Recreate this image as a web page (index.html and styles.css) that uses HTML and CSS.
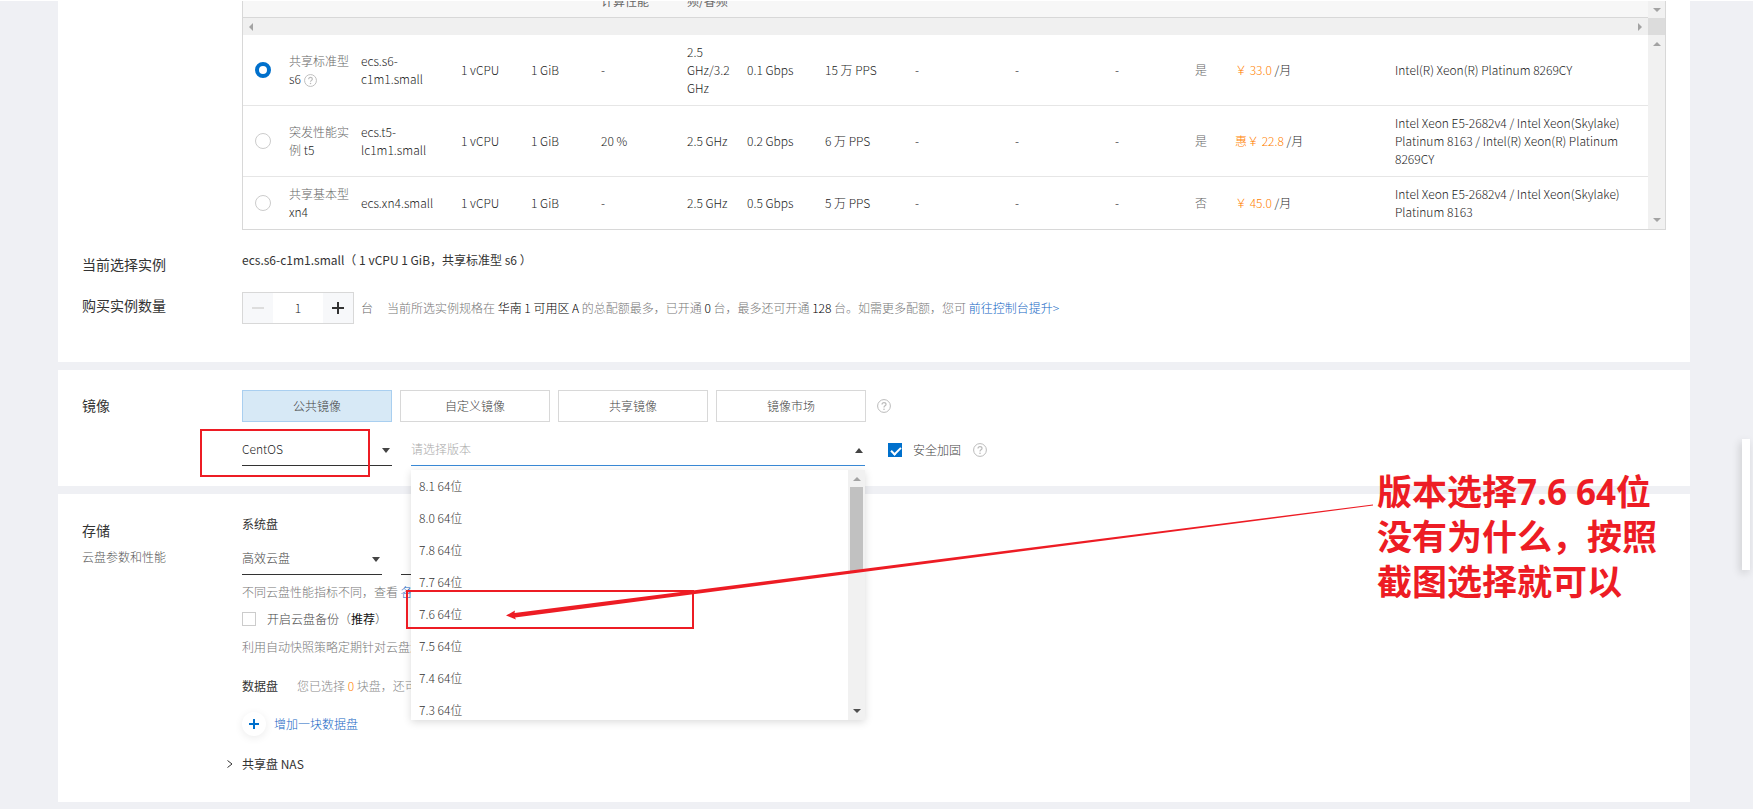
FILE: index.html
```html
<!DOCTYPE html>
<html lang="zh-CN">
<head>
  <meta charset="UTF-8" />
  <meta name="viewport" content="width=device-width, initial-scale=1.0" />
  <title>云服务器 ECS</title>
  <link rel="stylesheet" href="styles.css">
</head>
<body>
  <svg class="defs" width="0" height="0" aria-hidden="true">
    <symbol id="help" viewBox="0 0 14 14">
      <circle cx="7" cy="7" r="6.4" fill="none" stroke="currentColor" />
      <path d="M5 5.6C5 4.3 5.8 3.6 7 3.6s2 .7 2 1.8c0 1.4-2 1.5-2 3" fill="none" stroke="currentColor" stroke-width="1.2" />
      <circle cx="7" cy="10.3" r=".8" fill="currentColor" />
    </symbol>
  </svg>

  <main class="page">
    <!-- Instance type -->
    <section class="panel">
      <div class="form-row spec-row">
        <div class="spec">
          <div class="spec-head">
            <table class="spec-table">
              <colgroup>
                <col class="c-radio"><col class="c-name"><col class="c-id"><col class="c-short"><col class="c-short"><col class="c-perf"><col class="c-freq"><col class="c-band"><col class="c-pps"><col class="c-dash"><col class="c-dash"><col class="c-flag"><col class="c-ipv6"><col class="c-price"><col>
              </colgroup>
              <tr>
                <th></th><th></th><th></th><th></th><th></th>
                <th>计算性能</th><th>频/睿频</th>
                <th></th><th></th><th></th><th></th><th></th><th></th><th></th><th></th>
              </tr>
            </table>
            <div class="bar-v"><i class="tri down"></i></div>
          </div>
          <div class="bar-h">
            <i class="tri left"></i>
            <i class="tri right"></i>
            <span class="corner"></span>
          </div>
          <div class="spec-body">
            <table class="spec-table">
              <colgroup>
                <col class="c-radio"><col class="c-name"><col class="c-id"><col class="c-short"><col class="c-short"><col class="c-perf"><col class="c-freq"><col class="c-band"><col class="c-pps"><col class="c-dash"><col class="c-dash"><col class="c-flag"><col class="c-ipv6"><col class="c-price"><col>
              </colgroup>
              <tr>
                <td><input type="radio" name="spec" aria-label="ecs.s6-c1m1.small" checked></td>
                <td class="family">共享标准型<br><b>s6</b> <svg class="help small"><use href="#help" /></svg></td>
                <td>ecs.s6-<br>c1m1.small</td>
                <td>1 vCPU</td><td>1 GiB</td><td>-</td>
                <td>2.5<br>GHz/3.2<br>GHz</td>
                <td>0.1 Gbps</td><td>15 万 PPS</td><td>-</td><td>-</td><td>-</td>
                <td class="muted">是</td>
                <td><span class="price">￥ 33.0</span> /月</td>
                <td>Intel(R) Xeon(R) Platinum 8269CY</td>
              </tr>
              <tr>
                <td><input type="radio" name="spec" aria-label="ecs.t5-lc1m1.small"></td>
                <td class="family">突发性能实<br>例 <b>t5</b></td>
                <td>ecs.t5-<br>lc1m1.small</td>
                <td>1 vCPU</td><td>1 GiB</td><td>20 %</td>
                <td>2.5 GHz</td>
                <td>0.2 Gbps</td><td>6 万 PPS</td><td>-</td><td>-</td><td>-</td>
                <td class="muted">是</td>
                <td><span class="price">惠￥ 22.8</span> /月</td>
                <td>Intel Xeon E5-2682v4 / Intel Xeon(Skylake)<br>Platinum 8163 / Intel(R) Xeon(R) Platinum<br>8269CY</td>
              </tr>
              <tr>
                <td><input type="radio" name="spec" aria-label="ecs.xn4.small"></td>
                <td class="family">共享基本型<br><b>xn4</b></td>
                <td>ecs.xn4.small</td>
                <td>1 vCPU</td><td>1 GiB</td><td>-</td>
                <td>2.5 GHz</td>
                <td>0.5 Gbps</td><td>5 万 PPS</td><td>-</td><td>-</td><td>-</td>
                <td class="muted">否</td>
                <td><span class="price">￥ 45.0</span> /月</td>
                <td>Intel Xeon E5-2682v4 / Intel Xeon(Skylake)<br>Platinum 8163</td>
              </tr>
            </table>
            <div class="bar-v"><i class="tri up"></i><i class="tri down"></i></div>
          </div>
        </div>
      </div>

      <div class="form-row current-row">
        <h2 class="label">当前选择实例</h2>
        <p class="current">ecs.s6-c1m1.small（ 1 vCPU 1 GiB，共享标准型 s6 ）</p>
      </div>

      <div class="form-row count-row">
        <label class="label" for="count">购买实例数量</label>
        <div class="count">
          <div class="stepper">
            <button type="button" aria-label="减少" disabled><svg viewBox="0 0 12 12"><path d="M0 6h12" /></svg></button>
            <input type="text" id="count" value="1">
            <button type="button" aria-label="增加"><svg viewBox="0 0 12 12"><path d="M0 6h12M6 0v12" /></svg></button>
          </div>
          <span class="unit">台</span>
          <p class="note">当前所选实例规格在 <em>华南 1 可用区 A</em> 的总配额最多，已开通 <em>0</em> 台，最多还可开通 <em>128</em> 台。如需更多配额，您可 <a href="#">前往控制台提升&gt;</a></p>
        </div>
      </div>
    </section>

    <!-- Image -->
    <section class="panel">
      <div class="form-row">
        <h2 class="label label-tab">镜像</h2>
        <div class="image">
          <div class="tabs">
            <button type="button" class="tab active">公共镜像</button>
            <button type="button" class="tab">自定义镜像</button>
            <button type="button" class="tab">共享镜像</button>
            <button type="button" class="tab">镜像市场</button>
            <svg class="help"><use href="#help" /></svg>
          </div>
          <div class="selects">
            <div class="select os">
              <select aria-label="操作系统"><option>CentOS</option></select>
            </div>
            <div class="select version">
              <select aria-label="版本"><option>请选择版本</option></select>
              <div class="menu">
                <ul>
                  <li>8.1 64位</li>
                  <li>8.0 64位</li>
                  <li>7.8 64位</li>
                  <li>7.7 64位</li>
                  <li>7.6 64位</li>
                  <li>7.5 64位</li>
                  <li>7.4 64位</li>
                  <li>7.3 64位</li>
                </ul>
                <div class="bar-v"><i class="tri up"></i><span class="thumb"></span><i class="tri down dark"></i></div>
              </div>
            </div>
            <label class="check"><input type="checkbox" checked>安全加固</label>
            <svg class="help"><use href="#help" /></svg>
          </div>
        </div>
      </div>
    </section>

    <!-- Storage -->
    <section class="panel">
      <div class="form-row">
        <div class="label label-storage">
          <h2>存储</h2>
          <p>云盘参数和性能</p>
        </div>
        <div class="storage">
          <h3>系统盘</h3>
          <div class="disks">
            <div class="select disk">
              <select aria-label="系统盘类型"><option>高效云盘</option></select>
            </div>
            <div class="select size">
              <input type="text" aria-label="容量">
            </div>
          </div>
          <p class="note">不同云盘性能指标不同，查看 <a href="#">各</a></p>
          <label class="check backup"><input type="checkbox"><span>开启云盘备份（<strong>推荐</strong>）</span></label>
          <p class="note">利用自动快照策略定期针对云盘进</p>
          <div class="data-disk">
            <h3>数据盘</h3>
            <p class="note light">您已选择 <span class="price">0</span> 块盘，还可</p>
          </div>
          <a class="add" href="#">
            <span class="plus"><svg viewBox="0 0 10 10"><path d="M0 5h10M5 0v10" /></svg></span>
            增加一块数据盘
          </a>
          <button type="button" class="nas">
            <svg viewBox="0 0 6 8"><path d="M.5 .5l4.5 3.5-4.5 3.5" /></svg>
            共享盘 NAS
          </button>
        </div>
      </div>
    </section>

    <div class="side-tab"></div>

    <!-- Red marks drawn over the form -->
    <div class="mark mark-os"></div>
    <div class="mark mark-version"></div>
    <svg class="arrow" viewBox="0 0 868 116">
      <path d="M0 111.500L9 106.500L8.500 109L867 .5V1.500L9 113.500L10 115.500Z" />
    </svg>
    <p class="tip">版本选择7.6 64位<br>没有为什么，按照<br>截图选择就可以</p>
  </main>
</body>
</html>
```
FILE: styles.css
```css
:root {
  --blue: #0070cc;
  --orange: #ff7f00;
  --red: #ed1c24;
  --text: #1c1c1c;
  --muted: #666;
  --line: #d8d8d8;
  --bg: #eff0f4;
}

* {
  box-sizing: border-box;
  margin: 0;
  padding: 0;
}

body {
  font-family: "Noto Sans CJK SC", "Noto Sans", sans-serif;
  font-size: 12px;
  font-weight: 300;
  line-height: 18px;
  color: var(--text);
  background: var(--bg);
}

button,
input,
select {
  font: inherit;
  color: inherit;
  border: 0;
  outline: 0;
  background: none;
  appearance: none;
}

h2,
.label {
  font-size: 14px;
  font-weight: 400;
  line-height: 20px;
  color: #333;
}
h3 {
  font-size: 12px;
  font-weight: 400;
  line-height: 20px;
  color: #333;
}
a {
  color: #1366c4;
  text-decoration: none;
}
em {
  font-style: normal;
  color: #000;
}
ul {
  list-style: none;
}

.defs {
  position: absolute;
}

.page {
  position: relative;
  display: flex;
  flex-direction: column;
  gap: 8px;
  padding: 0 63px 8px 58px;
  border-top: 1px solid #fff;
  overflow: hidden;
}

.panel {
  background: #fff;
  padding: 20px 24px;
}
.panel:first-child {
  padding: 0 24px 38px;
}
.form-row {
  display: grid;
  grid-template-columns: 160px 1fr;
}

/* Scrollbars */
.tri {
  width: 0;
  height: 0;
  border: 4px solid transparent;
}
.tri.up {
  border-top: 0;
  border-bottom-color: #a3a3a3;
}
.tri.down {
  border-bottom: 0;
  border-top-color: #a3a3a3;
}
.tri.left {
  border-left: 0;
  border-right-color: #a3a3a3;
}
.tri.right {
  border-right: 0;
  border-left-color: #a3a3a3;
  margin-left: auto;
  margin-right: 6px;
}
.tri.down.dark {
  border-top-color: #505050;
}
.bar-v {
  flex: none;
  width: 17px;
  display: flex;
  flex-direction: column;
  align-items: center;
  justify-content: space-between;
  padding: 7px 0;
  background: #f1f1f1;
}
.bar-h {
  height: 17px;
  display: flex;
  align-items: center;
  padding-left: 6px;
  background: #f0f0f0;
}
.corner {
  width: 17px;
  height: 17px;
  background: #dcdcdc;
}

/* Instance table */
.spec {
  grid-column: 2;
  border: 1px solid var(--line);
  border-top: 0;
}
.spec-head {
  display: flex;
  align-items: flex-end;
  height: 17px;
  overflow: hidden;
  background: #f7f7f7;
}
.spec-head .bar-v {
  height: 17px;
}
.spec-head .spec-table {
  border-bottom: 1px solid var(--line);
}
.spec-head th {
  height: 36px;
  padding: 0 0 7px;
  font-weight: 400;
  color: var(--muted);
  text-align: left;
  vertical-align: bottom;
}
.spec-body {
  display: flex;
}
.spec-table {
  flex: 1;
  width: 100%;
  table-layout: fixed;
  border-collapse: collapse;
}
.spec-table td {
  padding: 8px 0;
  vertical-align: middle;
  white-space: nowrap;
  border-bottom: 1px solid #e6e6e6;
}
.spec-table tr:last-child td {
  border-bottom: 0;
}
.spec-table td:first-child {
  padding-left: 12px;
}
.c-radio { width: 46px; }
.c-name { width: 72px; }
.c-id { width: 100px; }
.c-short { width: 70px; }
.c-perf { width: 86px; }
.c-freq { width: 60px; }
.c-band { width: 78px; }
.c-pps { width: 90px; }
.c-dash { width: 100px; }
.c-flag { width: 80px; }
.c-ipv6 { width: 40px; }
.c-price { width: 160px; }

.family,
.muted {
  color: var(--muted);
}
.family b {
  font-weight: inherit;
  color: var(--text);
}
.price {
  color: var(--orange);
}
input[type="radio"] {
  display: block;
  width: 16px;
  height: 16px;
  border: 1px solid #ccc;
  border-radius: 50%;
}
input[type="radio"]:checked {
  border: 4px solid var(--blue);
}

.help {
  width: 14px;
  height: 14px;
  color: #bbb;
}
.help.small {
  width: 13px;
  height: 13px;
  vertical-align: -3px;
}

/* Current instance and count */
.current-row {
  margin-top: 20px;
}
.current-row .label {
  padding-top: 4px;
}
.current {
  font-weight: 400;
  line-height: 20px;
  color: #333;
}
.count-row {
  margin-top: 18px;
}
.count-row .label {
  padding-top: 3px;
}
.count {
  display: flex;
  align-items: center;
}
.stepper {
  display: flex;
  width: 112px;
  height: 32px;
  border: 1px solid var(--line);
}
.stepper button {
  width: 30px;
  display: flex;
  align-items: center;
  justify-content: center;
  background: #f7f8fa;
}
.stepper svg {
  width: 12px;
  height: 12px;
  stroke: #333;
  stroke-width: 2;
}
.stepper button:disabled svg {
  stroke: #ddd;
}
.stepper input {
  flex: 1;
  min-width: 0;
  text-align: center;
}
.unit {
  margin: 0 14px 0 7px;
  color: var(--muted);
}
.note {
  color: #777;
}
.note.light {
  color: #888;
}

/* Image */
.label-tab {
  padding-top: 5px;
}
.tabs {
  display: flex;
  align-items: center;
  gap: 8px;
}
.tab {
  width: 150px;
  height: 32px;
  border: 1px solid var(--line);
  color: #444;
}
.tab.active {
  background: #d7e9f6;
  border-color: #a9cff0;
}
.tabs .help {
  margin-left: 3px;
}
.selects {
  display: flex;
  align-items: center;
  margin-top: 12px;
}
.select {
  position: relative;
  height: 32px;
  border-bottom: 1px solid #333;
}
.select select {
  width: 100%;
  height: 30px;
}
.select::after {
  content: "";
  position: absolute;
  right: 2px;
  top: 14px;
  border: 4px solid transparent;
  border-top: 5px solid #444;
  border-bottom: 0;
  pointer-events: none;
}
.os {
  width: 150px;
}
.version {
  width: 454px;
  margin: 0 23px 0 19px;
  border-color: #3a8ad6;
  z-index: 2;
}
.version select {
  color: #aaa;
}
.version::after {
  border-top: 0;
  border-bottom: 5px solid #444;
}
.menu {
  position: absolute;
  top: 36px;
  left: 0;
  width: 100%;
  height: 250px;
  display: flex;
  overflow: hidden;
  background: #fff;
  box-shadow: 0 2px 8px rgba(0,0,0,0.15);
}
.menu ul {
  flex: 1;
}
.menu li {
  height: 32px;
  padding-left: 8px;
  line-height: 32px;
  color: #333;
}
.menu .bar-v {
  justify-content: flex-start;
}
.thumb {
  width: 13px;
  height: 84px;
  margin: 6px 0 auto;
  background: #c1c1c1;
}
.check {
  display: flex;
  align-items: center;
  gap: 11px;
  color: #444;
}
.check input {
  width: 14px;
  height: 14px;
  border: 1px solid #ccc;
}
.check input:checked {
  background: var(--blue);
  border: 0;
}
.check input:checked::after {
  content: "";
  display: block;
  width: 8px;
  height: 4px;
  margin: 4px 3px;
  border: solid #fff;
  border-width: 0 0 2px 2px;
  transform: rotate(-45deg);
}
.check strong {
  color: #111;
}
.selects .help {
  margin-left: 12px;
}

/* Storage */
.label-storage {
  padding-top: 6px;
}
.label-storage p {
  margin-top: 8px;
  font-size: 12px;
  font-weight: 300;
  line-height: 18px;
  color: #555;
}
.disks {
  display: flex;
  gap: 19px;
  margin: 9px 0 8px;
}
.disk {
  width: 140px;
  color: #444;
}
.size {
  width: 100px;
}
.backup {
  margin: 9px 0 10px;
}
.data-disk {
  display: flex;
  align-items: center;
  gap: 19px;
  margin-top: 20px;
}
.add {
  display: flex;
  align-items: center;
  gap: 8px;
  width: 140px;
  margin-top: 16px;
}
.plus {
  width: 24px;
  height: 24px;
  display: flex;
  align-items: center;
  justify-content: center;
  border-radius: 50%;
  box-shadow: 0 2px 8px rgba(0,0,0,0.08);
}
.plus svg {
  width: 10px;
  height: 10px;
  stroke: var(--blue);
  stroke-width: 2;
}
.nas {
  display: flex;
  align-items: center;
  gap: 9px;
  margin: 19px 0 9px -15px;
  font-weight: 400;
  color: #333;
}
.nas svg {
  width: 6px;
  height: 8px;
  fill: none;
  stroke: #333;
}

.side-tab {
  position: absolute;
  top: 438px;
  right: 3px;
  width: 8px;
  height: 131px;
  background: #fff;
  box-shadow: -2px 3px 8px rgba(0,0,0,0.15);
}

/* Marks */
.mark {
  position: absolute;
  border: 2px solid var(--red);
  z-index: 3;
}
.mark-os {
  top: 428px;
  left: 200px;
  width: 170px;
  height: 48px;
}
.mark-version {
  top: 589px;
  left: 406px;
  width: 288px;
  height: 39px;
}
.arrow {
  position: absolute;
  top: 503px;
  left: 506px;
  width: 868px;
  height: 116px;
  fill: var(--red);
  z-index: 3;
}
.tip {
  position: absolute;
  top: 468px;
  left: 1377px;
  font-family: "Open Sans", "Noto Sans CJK SC", sans-serif;
  font-size: 35px;
  font-weight: 700;
  line-height: 45px;
  color: var(--red);
  white-space: nowrap;
  z-index: 3;
}
```
